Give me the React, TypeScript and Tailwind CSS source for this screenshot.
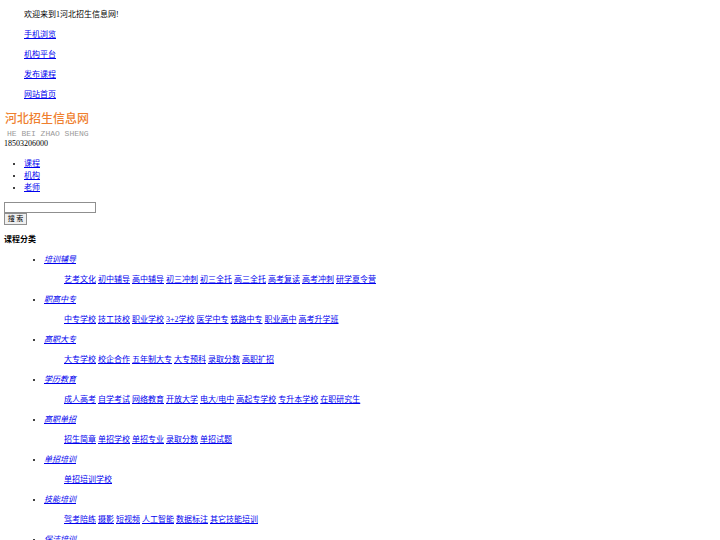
import React from "react";

const TOP_LINKS = ["手机浏览", "机构平台", "发布课程", "网站首页"];
const NAV = ["课程", "机构", "老师"];

const CATEGORIES = [
  { name: "培训辅导", subs: ["艺考文化", "初中辅导", "高中辅导", "初三冲刺", "初三全托", "高三全托", "高考复读", "高考冲刺", "研学夏令营"] },
  { name: "职高中专", subs: ["中专学校", "技工技校", "职业学校", "3+2学校", "医学中专", "铁路中专", "职业高中", "高考升学班"] },
  { name: "高职大专", subs: ["大专学校", "校企合作", "五年制大专", "大专预科", "录取分数", "高职扩招"] },
  { name: "学历教育", subs: ["成人高考", "自学考试", "网络教育", "开放大学", "电大/电中", "高起专学校", "专升本学校", "在职研究生"] },
  { name: "高职单招", subs: ["招生简章", "单招学校", "单招专业", "录取分数", "单招试题"] },
  { name: "单招培训", subs: ["单招培训学校"] },
  { name: "技能培训", subs: ["驾考陪练", "摄影", "短视频", "人工智能", "数据标注", "其它技能培训"] },
  { name: "保洁培训", subs: [] },
];

const font = "font-['Liberation_Serif','Noto_Sans_CJK_SC',serif]";

export default function App() {
  return (
    <div className={`min-h-[540px] bg-white text-black text-[8px] ${font}`}>
      {/* top bar */}
      <ul className="list-none pl-[24px] pt-[5px]">
        <li className="h-[20px] leading-[20px]">欢迎来到1河北招生信息网!</li>
        {TOP_LINKS.map((t) => (
          <li key={t} className="h-[20px] leading-[20px]">
            <a href="#" className="text-[#0000ee] underline">{t}</a>
          </li>
        ))}
      </ul>

      {/* logo */}
      <div className="h-[25px] leading-[25px] pl-[5px] text-[12px] font-medium text-[#ef7f2f] font-['Noto_Sans_CJK_SC',sans-serif]">
        河北招生信息网
      </div>
      <div className="h-[8px] leading-[8px] pl-[7px] text-[8px] text-[#9a9a9a] font-['Liberation_Mono',monospace] whitespace-pre">
        HE BEI ZHAO SHENG
      </div>
      <div className="h-[12px] leading-[12px] pl-[4px]">18503206000</div>

      {/* nav */}
      <ul className="list-disc pl-[24px] pt-[8px]">
        {NAV.map((t) => (
          <li key={t} className="h-[12px] leading-[12px]">
            <a href="#" className="text-[#0000ee] underline">{t}</a>
          </li>
        ))}
      </ul>

      {/* search */}
      <div className="pl-[4px] pt-[8px]">
        <input className="block w-[92px] h-[11px] border border-[#8f8f8f] bg-white" />
        <button className="block w-[23px] h-[12px] border border-[#8f8f8f] bg-[#efefef] text-[7px] leading-[10px] text-black">
          搜 索
        </button>
      </div>

      <h4 className="mt-[5px] h-[20px] leading-[20px] pl-[4px] font-bold text-[8px]">课程分类</h4>

      {/* categories */}
      <ul className="list-disc pl-[44px]">
        {CATEGORIES.map((c) => (
          <li key={c.name}>
            <div className="h-[20px] leading-[20px]">
              <a href="#" className="italic text-[#0000ee] underline">{c.name}</a>
            </div>
            {c.subs.length > 0 && (
              <div className="h-[20px] leading-[20px] pl-[20px]">
                {c.subs.map((s, i) => (
                  <React.Fragment key={s}>
                    {i > 0 && " "}
                    <a href="#" className="text-[#0000ee] underline">{s}</a>
                  </React.Fragment>
                ))}
              </div>
            )}
          </li>
        ))}
      </ul>
    </div>
  );
}
